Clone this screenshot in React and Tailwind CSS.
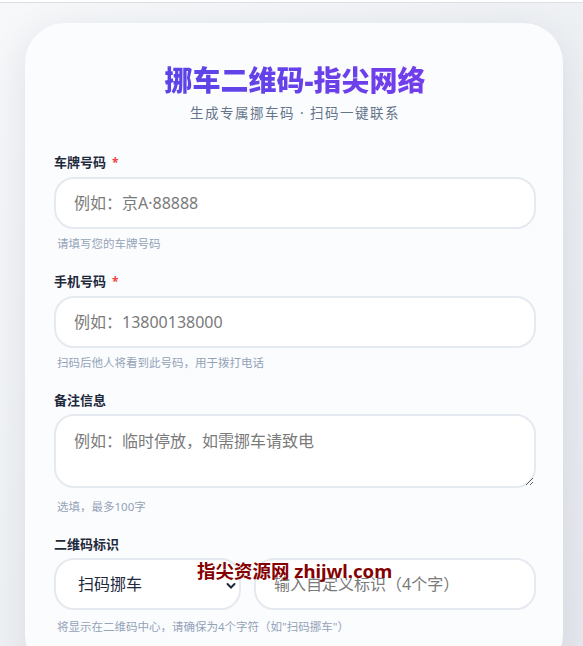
import { useState } from 'react';

const font = { fontFamily: '"Noto Sans", "Noto Sans CJK SC", sans-serif' };

const Label = ({ children, required }) => (
  <div className="text-[13px] font-bold leading-[20px] text-[#1e293b] mb-[4px]">
    {children}
    {required && <span className="text-[#ef4444] ml-[6px] text-[12px]">*</span>}
  </div>
);

const Hint = ({ children, className = 'mt-[6px]' }) => (
  <p className={`${className} pl-[3px] text-[11.5px] leading-[17px] text-[#94a3b8]`}>{children}</p>
);

const inputCls =
  'w-full h-[52px] rounded-[20px] border-2 border-[#e5e9f0] bg-white px-[18px] text-[16px] text-[#1e293b] placeholder:text-[#7a7a7a] outline-none';

export default function App() {
  const [plate, setPlate] = useState('');
  const [phone, setPhone] = useState('');
  const [note, setNote] = useState('');
  const [mark, setMark] = useState('扫码挪车');
  const [custom, setCustom] = useState('');

  return (
    <div className="min-h-[646px] bg-gradient-to-br from-[#f6f8fa] to-[#e6e9ee] relative overflow-hidden" style={font}>
      <div className="h-[3px] bg-white border-b border-[#dcdfe3]" />
      <div className="ml-[25px] mt-[20px] w-[538px] rounded-[40px] bg-[#fbfcfe] shadow-[0_10px_40px_rgba(30,41,59,0.10)] pt-[39px] pl-[29px] pr-[27px] pb-10">
        <h1 className="text-center text-[28px] font-black leading-[36px] bg-gradient-to-r from-[#4f46e5] to-[#7c3aed] bg-clip-text text-transparent">
          挪车二维码-指尖网络
        </h1>
        <p className="mt-[5px] text-center text-[13.5px] leading-[20px] tracking-[1.5px] text-[#64748b]">
          生成专属挪车码 · 扫码一键联系
        </p>

        <div className="mt-[29px]">
          <Label required>车牌号码</Label>
          <input className={inputCls} placeholder="例如：京A·88888" value={plate} onChange={(e) => setPlate(e.target.value)} />
          <Hint>请填写您的车牌号码</Hint>
        </div>

        <div className="mt-[19px]">
          <Label required>手机号码</Label>
          <input className={inputCls} placeholder="例如：13800138000" value={phone} onChange={(e) => setPhone(e.target.value)} />
          <Hint>扫码后他人将看到此号码，用于拨打电话</Hint>
        </div>

        <div className="mt-[19px]">
          <Label>备注信息</Label>
          <textarea
            className="block w-full h-[74px] rounded-[20px] border-2 border-[#e5e9f0] bg-white px-[18px] pt-[13px] text-[16px] leading-[24px] text-[#1e293b] placeholder:text-[#7a7a7a] outline-none"
            placeholder="例如：临时停放，如需挪车请致电"
            value={note}
            onChange={(e) => setNote(e.target.value)}
          />
          <Hint className="mt-[10px]">选填，最多100字</Hint>
        </div>

        <div className="mt-[19px]">
          <Label>二维码标识</Label>
          <div className="flex gap-[13px] mt-[2px]">
            <div className="relative w-[187px] shrink-0">
              <select
                className="w-full h-[52px] appearance-none rounded-[20px] border-2 border-[#e5e9f0] bg-white pl-[22px] text-[16px] text-[#1e293b] outline-none"
                value={mark}
                onChange={(e) => setMark(e.target.value)}
              >
                <option>扫码挪车</option>
                <option>自定义</option>
              </select>
              <svg className="absolute right-[5px] top-[24px] pointer-events-none" width="10" height="8" viewBox="0 0 10 8">
                <path d="M1.5 2 L5 5.5 L8.5 2" fill="none" stroke="#1e293b" strokeWidth="2" strokeLinecap="round" />
              </svg>
            </div>
            <input className={inputCls} placeholder="输入自定义标识（4个字）" value={custom} onChange={(e) => setCustom(e.target.value)} />
          </div>
          <Hint className="mt-[8px]">将显示在二维码中心，请确保为4个字符（如"扫码挪车"）</Hint>
        </div>
      </div>

      <div className="absolute left-[197px] top-[559px] text-[18.5px] font-bold leading-[24px] text-[#850000] pointer-events-none">
        指尖资源网 zhijwl.com
      </div>
    </div>
  );
}
